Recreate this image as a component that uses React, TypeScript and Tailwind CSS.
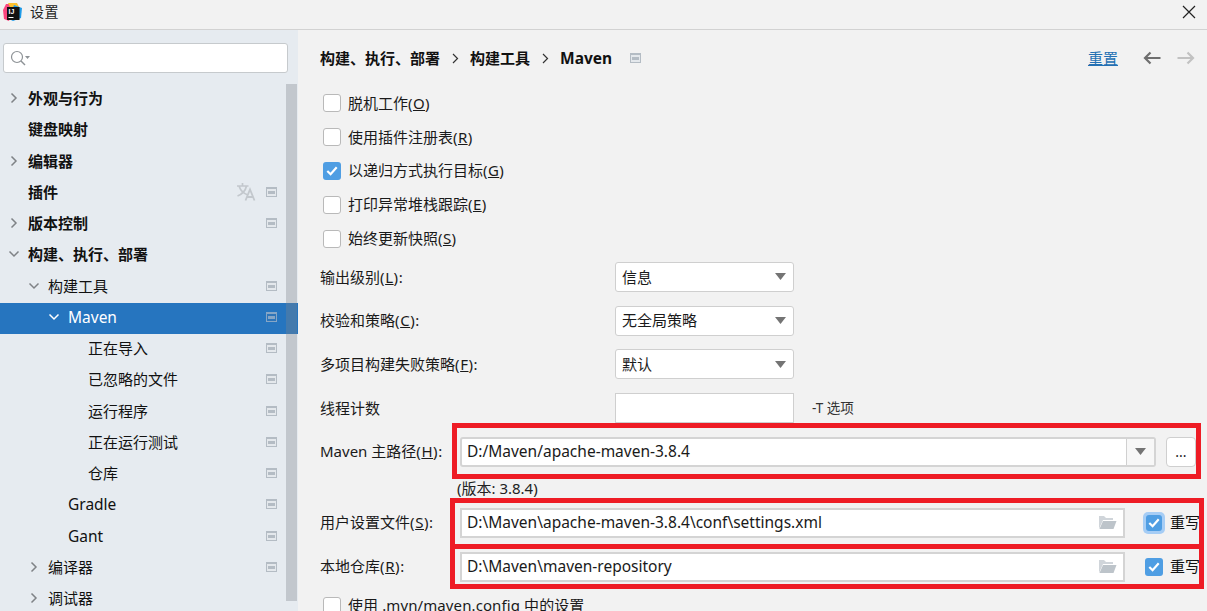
import React from "react";

const FONT = '[font-family:"Noto_Sans","Noto_Sans_CJK_SC",sans-serif]';

function ProjectIcon({ selected = false }: { selected?: boolean }) {
  return (
    <svg width="11" height="10" viewBox="0 0 11 10" className="shrink-0">
      <rect x="0" y="0" width="11" height="10" fill={selected ? "#86a6c6" : "#b4bcc4"} />
      <rect x="1" y="2" width="9" height="7" fill={selected ? "#2f75b8" : "#e4e8ec"} />
      <rect x="2" y="4" width="7" height="3" fill={selected ? "#86a6c6" : "#b4bcc4"} />
    </svg>
  );
}

function TranslateIcon() {
  return (
    <svg width="20" height="19" viewBox="0 0 20 19" fill="none" className="shrink-0 mr-[10px]">
      <path
        d="M1 4 H12.5 M6.5 1 V4 M3 4 C4.5 8.5 7.5 11.5 12 13 M10.5 4 C9.5 8.5 6.5 12 1.5 14"
        stroke="#c3c8cd"
        strokeWidth="1.7"
      />
      <path d="M9.5 18.5 L14 7.5 L18.5 18.5 M11 15 H17" stroke="#c3c8cd" strokeWidth="1.8" />
    </svg>
  );
}

function Chevron({ open, light }: { open?: boolean; light?: boolean }) {
  const c = light ? "#ffffff" : "#7f8286";
  return (
    <svg width="20" height="16" viewBox="0 0 20 16" fill="none" className="shrink-0">
      {open ? (
        <path d="M5.5 5.5 L10 10 L14.5 5.5" stroke={c} strokeWidth="1.5" />
      ) : (
        <path d="M7.5 3.5 L12 8 L7.5 12.5" stroke={c} strokeWidth="1.5" />
      )}
    </svg>
  );
}

type Row = {
  label: string;
  pad: string;
  bold?: boolean;
  arrow?: "open" | "closed";
  icon?: boolean;
  translate?: boolean;
  selected?: boolean;
  latin?: boolean;
};

const rows: Row[] = [
  { label: "外观与行为", pad: "pl-[4px]", bold: true, arrow: "closed" },
  { label: "键盘映射", pad: "pl-[4px]", bold: true },
  { label: "编辑器", pad: "pl-[4px]", bold: true, arrow: "closed" },
  { label: "插件", pad: "pl-[4px]", bold: true, icon: true, translate: true },
  { label: "版本控制", pad: "pl-[4px]", bold: true, arrow: "closed", icon: true },
  { label: "构建、执行、部署", pad: "pl-[4px]", bold: true, arrow: "open" },
  { label: "构建工具", pad: "pl-[24px]", arrow: "open", icon: true },
  { label: "Maven", pad: "pl-[44px]", arrow: "open", icon: true, selected: true, latin: true },
  { label: "正在导入", pad: "pl-[64px]", icon: true },
  { label: "已忽略的文件", pad: "pl-[64px]", icon: true },
  { label: "运行程序", pad: "pl-[64px]", icon: true },
  { label: "正在运行测试", pad: "pl-[64px]", icon: true },
  { label: "仓库", pad: "pl-[64px]", icon: true },
  { label: "Gradle", pad: "pl-[44px]", icon: true, latin: true },
  { label: "Gant", pad: "pl-[44px]", icon: true, latin: true },
  { label: "编译器", pad: "pl-[24px]", arrow: "closed", icon: true },
  { label: "调试器", pad: "pl-[24px]", arrow: "closed" },
];

function TreeRow({ r }: { r: Row }) {
  return (
    <div
      className={`h-[31.25px] shrink-0 flex items-center pb-[2.6px] pr-[21px] ${r.pad} ${
        r.selected ? "bg-[#2675bf] text-[#ffffff]" : "text-[#111111]"
      }`}
    >
      <span className="w-[24px] shrink-0 flex">
        {r.arrow && <Chevron open={r.arrow === "open"} light={r.selected} />}
      </span>
      <span
        className={`flex-1 whitespace-nowrap leading-[20px] ${r.latin ? "text-[15.5px]" : "text-[15px]"} ${
          r.bold ? "font-bold" : ""
        }`}
      >
        {r.label}
      </span>
      {r.translate && <TranslateIcon />}
      {r.icon && <ProjectIcon selected={r.selected} />}
    </div>
  );
}

function Check({ checked, small }: { checked?: boolean; small?: boolean }) {
  const size = small ? "w-[16px] h-[16px]" : "w-[18px] h-[18px]";
  return checked ? (
    <span className={`${size} shrink-0 rounded-[3px] bg-[#4f9ee3] flex items-center justify-center`}>
      <svg width="12" height="10" viewBox="0 0 12 10" fill="none">
        <path d="M1.3 5 L4.6 8.2 L10.7 1.3" stroke="#ffffff" strokeWidth="2.2" />
      </svg>
    </span>
  ) : (
    <span className={`${size} shrink-0 rounded-[3px] bg-[#ffffff] border border-[#b9b9b9]`} />
  );
}

function CheckRow({
  checked,
  pre,
  mnemonic,
  latin,
}: {
  checked?: boolean;
  pre: string;
  mnemonic?: string;
  latin?: boolean;
}) {
  return (
    <div className="h-[33.9px] shrink-0 flex items-center gap-[7px] ml-[3px] text-[15px] text-[#1a1a1a]">
      <Check checked={checked} />
      <span className={`whitespace-nowrap ${latin ? "tracking-[0.1px]" : ""}`}>
        {pre}
        {mnemonic && (
          <span className="tracking-[0.4px]">
            (<u>{mnemonic}</u>)
          </span>
        )}
      </span>
    </div>
  );
}

function Triangle() {
  return (
    <svg width="11" height="7" viewBox="0 0 11 7" className="shrink-0">
      <path d="M0 0 H11 L5.5 7 Z" fill="#747474" />
    </svg>
  );
}

function Label({ pre, k, width = "w-[295px]" }: { pre: string; k?: string; width?: string }) {
  return (
    <span className={`${width} shrink-0 whitespace-nowrap text-[15px] text-[#1a1a1a]`}>
      {pre}
      {k && (
        <span className="tracking-[0.6px]">
          (<u>{k}</u>):
        </span>
      )}
    </span>
  );
}

function ComboRow({ pre, k, value }: { pre: string; k: string; value: string }) {
  return (
    <div className="h-[43.67px] shrink-0 flex items-center">
      <Label pre={pre} k={k} />
      <div className="w-[179px] h-[30px] rounded-[3px] bg-[#ffffff] border border-[#cfcfcf] flex items-center justify-between pl-[6px] pr-[7px] text-[15px] text-[#1a1a1a]">
        <span>{value}</span>
        <Triangle />
      </div>
    </div>
  );
}

function Folder() {
  return (
    <svg width="19" height="15" viewBox="0 0 19 15" className="shrink-0">
      <path d="M1 14 V1 H6 L8 3 H15 V5 H5 Z" fill="#d0d5da" />
      <path d="M1.5 14 L5 6 H18.5 L15.5 14 Z" fill="#bdc4ca" />
    </svg>
  );
}

function PathRow({
  pre,
  k,
  value,
  focused,
}: {
  pre: string;
  k: string;
  value: string;
  focused?: boolean;
}) {
  return (
    <div className="h-[44px] shrink-0 flex items-center">
      <Label pre={pre} k={k} width="w-[140px]" />
      <div className="w-[665px] h-[30px] bg-[#ffffff] border-2 border-[#d4d4d4] flex items-center justify-between pl-[5px] pr-[6px] text-[15.5px] text-[#1a1a1a]">
        <span className="whitespace-nowrap">{value}</span>
        <Folder />
      </div>
      <span className="ml-[20px] flex items-center gap-[7px] text-[15px] text-[#111111]">
        {focused ? (
          <span className="w-[22px] h-[22px] -mx-[2px] p-[3px] rounded-[5px] bg-[#a6cdf5] flex">
            <Check checked small />
          </span>
        ) : (
          <span className="flex">
            <Check checked />
          </span>
        )}
        <span className="whitespace-nowrap">重写</span>
      </span>
    </div>
  );
}

export default function App() {
  return (
    <div className={`relative w-[1207px] h-[611px] overflow-hidden bg-[#f2f2f2] flex flex-col ${FONT}`}>
      {/* title bar */}
      <header className="h-[30px] shrink-0 border-b border-[#d2d2d2] flex items-start pl-[2px] pr-[11px]">
        <svg width="20" height="20" viewBox="0 0 20 20" className="shrink-0 mt-[2px]">
          <path d="M1 8 L4 2 L11 2 L7 19 L2 17 Z" fill="#f9467f" />
          <path d="M6 1 L15 1 L18 7 L9 7 Z" fill="#fcc02e" />
          <path d="M12 3 L20 6 L19 16 L11 19 L7 17 Z" fill="#1e9be8" />
          <rect x="5" y="5" width="12.5" height="13" fill="#111111" />
          <text x="6.5" y="11.5" fontSize="7" fontWeight="700" fill="#ffffff" fontFamily="Liberation Sans, sans-serif">
            IJ
          </text>
          <rect x="6.5" y="15" width="5" height="1" fill="#ffffff" />
        </svg>
        <span className="ml-[8px] flex-1 text-[14px] leading-[24px] tracking-[0.5px] text-[#222222]">设置</span>
        <svg width="14" height="14" viewBox="0 0 14 14" fill="none" className="mt-[5px]">
          <path d="M1 1 L13 13 M13 1 L1 13" stroke="#222222" strokeWidth="1.2" />
        </svg>
      </header>

      <div className="flex-1 min-h-0 flex">
        {/* sidebar */}
        <aside className="relative w-[298px] shrink-0 bg-[#e6ebf0] flex flex-col overflow-hidden">
          <div className="h-[53.9px] shrink-0 pl-[3px] pt-[13px]">
            <div className="w-[285px] h-[30px] rounded-[3px] bg-[#ffffff] border border-[#c6cacd] flex items-center pl-[6px]">
              <svg width="22" height="17" viewBox="0 0 22 17" fill="none">
                <circle cx="7" cy="7" r="5.5" stroke="#8d9296" strokeWidth="1.2" />
                <path d="M11 11 L15 15" stroke="#8d9296" strokeWidth="1.5" />
                <path d="M15 6 H20 L17.5 9 Z" fill="#8d9296" />
              </svg>
            </div>
          </div>
          {rows.map((r) => (
            <TreeRow key={r.label} r={r} />
          ))}
          <div className="absolute left-[286px] top-[54px] w-[11px] h-[517px] bg-[#7f858c]/35" />
        </aside>

        {/* main */}
        <main className="flex-1 min-w-0 pl-[22px] flex flex-col">
          <div className="h-[56px] shrink-0 flex items-center text-[15px] font-bold text-[#111111]">
            <span>构建、执行、部署</span>
            <span className="w-[30px] flex justify-center">
              <svg width="7" height="11" viewBox="0 0 7 11" fill="none">
                <path d="M1 1 L5.5 5.5 L1 10" stroke="#333333" strokeWidth="1.2" />
              </svg>
            </span>
            <span>构建工具</span>
            <span className="w-[31px] flex justify-center">
              <svg width="7" height="11" viewBox="0 0 7 11" fill="none">
                <path d="M1 1 L5.5 5.5 L1 10" stroke="#333333" strokeWidth="1.2" />
              </svg>
            </span>
            <span className="text-[15.5px] leading-[23px] -ml-[1px]">Maven</span>
            <span className="ml-[18px] flex">
              <ProjectIcon />
            </span>
            <span className="flex-1" />
            <span className="mr-[25px] font-normal underline text-[#2470b3]">重置</span>
            <svg width="18" height="14" viewBox="0 0 18 14" fill="none" className="mr-[16px]">
              <path d="M17.5 7 H2 M7.5 1.5 L2 7 L7.5 12.5" stroke="#6f6f6f" strokeWidth="2.2" />
            </svg>
            <svg width="18" height="14" viewBox="0 0 18 14" fill="none" className="mr-[12px]">
              <path d="M0.5 7 H16 M10.5 1.5 L16 7 L10.5 12.5" stroke="#c2c2c2" strokeWidth="2.2" />
            </svg>
          </div>

          <CheckRow pre="脱机工作" mnemonic="O" />
          <CheckRow pre="使用插件注册表" mnemonic="R" />
          <CheckRow pre="以递归方式执行目标" mnemonic="G" checked />
          <CheckRow pre="打印异常堆栈跟踪" mnemonic="E" />
          <CheckRow pre="始终更新快照" mnemonic="S" />

          <div className="-mt-[0.4px] flex flex-col">
            <ComboRow pre="输出级别" k="L" value="信息" />
            <ComboRow pre="校验和策略" k="C" value="无全局策略" />
            <ComboRow pre="多项目构建失败策略" k="F" value="默认" />
            <div className="h-[43.67px] shrink-0 flex items-center">
              <Label pre="线程计数" />
              <div className="w-[179px] h-[30px] bg-[#ffffff] border border-[#cfcfcf]" />
              <span className="ml-[18px] text-[13.5px] text-[#333333]">-T 选项</span>
            </div>
            <div className="h-[43.67px] shrink-0 flex items-center">
              <Label pre="Maven 主路径" k="H" width="w-[140px]" />
              <div className="w-[696px] h-[30px] rounded-[3px] bg-[#ffffff] border-2 border-[#d4d4d4] flex items-center text-[15.5px] text-[#1a1a1a]">
                <span className="flex-1 pl-[5px] whitespace-nowrap">D:/Maven/apache-maven-3.8.4</span>
                <span className="w-[28px] h-full shrink-0 bg-[#f7f7f7] border-l border-[#d0d0d0] flex items-center justify-center">
                  <Triangle />
                </span>
              </div>
              <div className="ml-[10px] w-[30px] h-[30px] rounded-[4px] bg-[#ffffff] border border-[#cfcfcf] flex items-center justify-center text-[14px] text-[#222222]">
                ...
              </div>
            </div>
            <div className="mt-[4.4px] h-[20px] shrink-0 ml-[137px] text-[15px] leading-[20px] text-[#222222]">
              (版本: 3.8.4)
            </div>
            <div className="mt-[3px] flex flex-col">
              <PathRow pre="用户设置文件" k="S" value="D:\Maven\apache-maven-3.8.4\conf\settings.xml" focused />
              <PathRow pre="本地仓库" k="R" value="D:\Maven\maven-repository" />
            </div>
            <CheckRow pre="使用 .mvn/maven.config 中的设置" latin />
          </div>
        </main>
      </div>

      {/* red annotation frames */}
      <div className="absolute left-[452px] top-[423px] w-[749px] h-[56px] border-[5px] border-[#ee1c25] pointer-events-none" />
      <div className="absolute left-[450px] top-[498px] w-[754px] h-[51px] border-[5px] border-[#ee1c25] pointer-events-none" />
      <div className="absolute left-[450px] top-[544px] w-[754px] h-[45px] border-[5px] border-[#ee1c25] pointer-events-none" />
    </div>
  );
}
